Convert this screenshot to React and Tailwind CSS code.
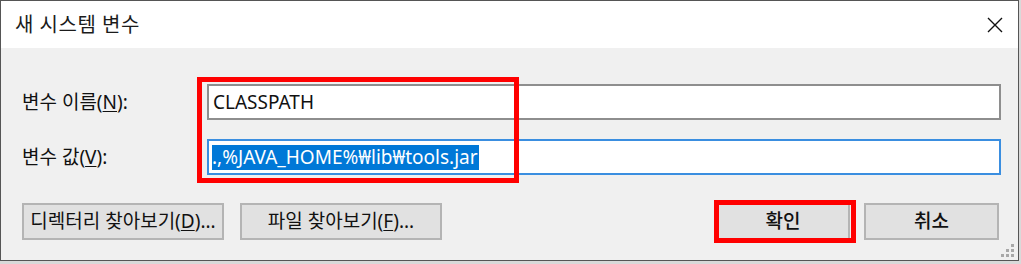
import React from "react";

const font = { fontFamily: '"Noto Sans", "Noto Sans CJK KR", sans-serif' };

function Btn({ children, className = "" }) {
  return (
    <div
      className={`h-[37px] flex items-center justify-center bg-[#e1e1e1] border-2 border-[#b4b4b4] text-[19px] text-[#111] whitespace-nowrap ${className}`}
    >
      {children}
    </div>
  );
}

export default function App() {
  return (
    <div className="w-[1021px] h-[264px] bg-[#d9d9d9] relative" style={font}>
      <div className="w-[1019px] h-[261px] border border-[#555] bg-[#f0f0f0] flex flex-col relative">
        {/* title bar */}
        <div className="h-[47px] bg-white flex items-center justify-between pl-[14px] pr-[14px] shrink-0">
          <span className="text-[20px] text-[#1b1b1b] tracking-[0.5px]">새 시스템 변수</span>
          <svg width="16" height="16" viewBox="0 0 16 16" className="mr-[1px]">
            <path d="M1 1 L15 15 M15 1 L1 15" stroke="#111" strokeWidth="1.4" />
          </svg>
        </div>
        {/* body */}
        <div className="flex-1 flex flex-col pl-[21px] pt-[36px]">
          <div className="flex items-center h-[36px]">
            <div className="w-[185px] text-[19px] text-[#111] whitespace-nowrap">
              변수 이름(<u className="underline-offset-2">N</u>):
            </div>
            <div className="w-[794px] h-[36px] bg-white border-2 border-[#8e8e8e] flex items-center pl-[4px] text-[19px] text-[#111]">
              CLASSPATH
            </div>
          </div>
          <div className="flex items-center h-[36px] mt-[19px]">
            <div className="w-[185px] text-[19px] text-[#111] whitespace-nowrap">
              변수 값(<u className="underline-offset-2">V</u>):
            </div>
            <div className="w-[794px] h-[36px] bg-white border-2 border-[#3a8ee0] flex items-center pl-[3px] text-[19px]">
              <span className="bg-[#0078d7] text-white leading-[25px] pr-[1px]">.,%JAVA_HOME%₩lib₩tools.jar</span>
            </div>
          </div>
          <div className="flex items-center mt-[28px] pr-[19px]">
            <Btn className="w-[202px]">
              디렉터리 찾아보기(<u className="underline-offset-2">D</u>)...
            </Btn>
            <Btn className="w-[202px] ml-[16px]">
              파일 찾아보기(<u className="underline-offset-2">F</u>)...
            </Btn>
            <div className="flex-1" />
            <Btn className="w-[134px] border-[#0078d7] border font-medium">확인</Btn>
            <Btn className="w-[135px] ml-[14px] font-medium">취소</Btn>
          </div>
        </div>
        {/* resize grip */}
        <svg width="14" height="14" viewBox="0 0 14 14" className="absolute right-[3px] bottom-[2px]">
          {[[10, 0], [5, 5], [10, 5], [0, 10], [5, 10], [10, 10]].map(([x, y], i) => (
            <rect key={i} x={x} y={y} width="3" height="3" fill="#a8a8a8" />
          ))}
        </svg>
      </div>
      {/* red annotation boxes */}
      <div className="absolute left-[197px] top-[77px] w-[322px] h-[106px] border-[5px] border-[#ff0000]" />
      <div className="absolute left-[714px] top-[200px] w-[142px] h-[43px] border-[5px] border-[#ff0000]" />
    </div>
  );
}
